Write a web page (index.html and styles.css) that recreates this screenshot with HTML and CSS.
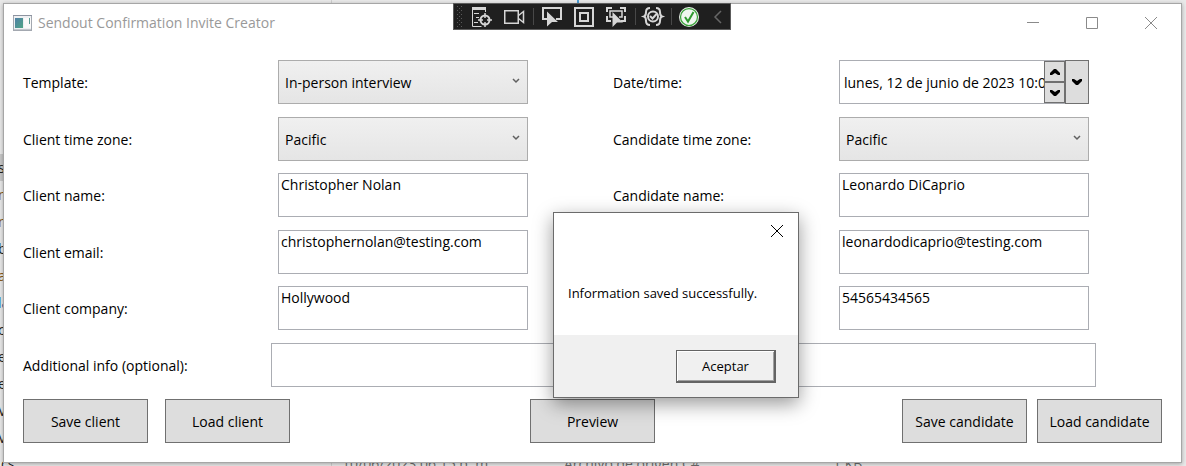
FILE: index.html
```html
<!DOCTYPE html>
<html lang="en">
<head>
<meta charset="utf-8">
<title>Sendout Confirmation Invite Creator</title>
<link rel="stylesheet" href="styles.css">
</head>
<body>
<div class="backdrop" aria-hidden="true">
  <div class="tree">
    <span class="tree-item tree-item-active">s</span>
    <span class="tree-item tree-brown">n</span>
    <span class="tree-item tree-brown">n</span>
    <span class="tree-item">b</span>
    <span class="tree-item tree-brown">a</span>
    <span class="tree-item tree-blue">la</span>
    <span class="tree-item">c</span>
    <span class="tree-item">e</span>
    <span class="tree-item">e</span>
    <span class="tree-item">Vi</span>
    <span class="tree-item">Vi</span>
  </div>
  <div class="file-row">
    <span class="file-name">cs</span>
    <span>10/06/2023 06:15 p. m.</span>
    <span>Archivo de origen C#</span>
    <span>1 KB</span>
  </div>
</div>

<main class="window">
  <header class="titlebar">
    <svg class="app-icon" width="19" height="16" viewBox="0 0 19 16">
      <defs><linearGradient id="pane" x1="0" y1="0" x2="1" y2="1"><stop offset="0" stop-color="#4f7fa6"/><stop offset="1" stop-color="#4fa586"/></linearGradient></defs>
      <rect x=".5" y=".5" width="18" height="15" fill="#eef0f2" stroke="#a3a8b0"/>
      <path d="M0 .5h19" stroke="#8d93a0"/><path d="M1 14.5h17" stroke="#c3c7cd"/>
      <rect x="2" y="3" width="8" height="10" fill="url(#pane)"/>
      <rect x="11" y="3" width="7" height="10" fill="#fafafa"/>
      <path d="M16.500 3v6" stroke="#5c9a92"/>
    </svg>
    <h1 class="title">Sendout Confirmation Invite Creator</h1>
    <div class="caption">
      <button class="caption-button" aria-label="Minimize"><svg width="12" height="12" viewBox="0 0 12 12"><path d="M0 5.5h12"/></svg></button>
      <button class="caption-button" aria-label="Maximize"><svg width="12" height="12" viewBox="0 0 12 12"><path d="M.5 .5h11v11h-11z"/></svg></button>
      <button class="caption-button" aria-label="Close"><svg width="12" height="12" viewBox="0 0 12 12"><path d="M0 0l12 12M12 0L0 12"/></svg></button>
    </div>
  </header>

  <form class="form">
    <div class="row">
      <label for="template">Template:</label>
      <div class="select"><select id="template"><option>In-person interview</option></select><svg class="chevron" width="8" height="6" viewBox="0 0 8 6"><path d="M1 1l3 3 3-3"/></svg></div>
      <label for="date">Date/time:</label>
      <div class="datetime">
        <input id="date" class="date-input" type="text" value="lunes, 12 de junio de 2023 10:00 a. m.">
        <div class="spinner">
          <button type="button" class="spin" aria-label="Later"><svg width="10" height="6" viewBox="0 0 10 6"><path d="M4 0h2l4 4v2H8L5 4 2 6H0V4z"/></svg></button>
          <button type="button" class="spin" aria-label="Earlier"><svg width="10" height="6" viewBox="0 0 10 6"><path d="M4 6h2l4-4V0H8L5 2 2 0H0v2z"/></svg></button>
        </div>
        <button type="button" class="drop" aria-label="Open calendar"><svg width="10" height="6" viewBox="0 0 10 6"><path d="M4 6h2l4-4V0H8L5 2 2 0H0v2z"/></svg></button>
      </div>
    </div>
    <div class="row">
      <label for="client-zone">Client time zone:</label>
      <div class="select"><select id="client-zone"><option>Pacific</option></select><svg class="chevron" width="8" height="6" viewBox="0 0 8 6"><path d="M1 1l3 3 3-3"/></svg></div>
      <label for="candidate-zone">Candidate time zone:</label>
      <div class="select"><select id="candidate-zone"><option>Pacific</option></select><svg class="chevron" width="8" height="6" viewBox="0 0 8 6"><path d="M1 1l3 3 3-3"/></svg></div>
    </div>
    <div class="row">
      <label for="client-name">Client name:</label>
      <input id="client-name" class="text" type="text" value="Christopher Nolan">
      <label for="candidate-name">Candidate name:</label>
      <input id="candidate-name" class="text" type="text" value="Leonardo DiCaprio">
    </div>
    <div class="row">
      <label for="client-email">Client email:</label>
      <input id="client-email" class="text" type="text" value="christophernolan@testing.com">
      <input class="text text-candidate" type="text" aria-label="Candidate email" value="leonardodicaprio@testing.com">
    </div>
    <div class="row">
      <label for="client-company">Client company:</label>
      <input id="client-company" class="text" type="text" value="Hollywood">
      <input class="text text-candidate" type="text" aria-label="Candidate phone" value="54565434565">
    </div>
    <div class="row row-wide">
      <label for="info">Additional info (optional):</label>
      <input id="info" class="text text-wide" type="text">
    </div>
    <div class="actions">
      <div class="group group-client">
        <button type="button" class="action">Save client</button>
        <button type="button" class="action">Load client</button>
      </div>
      <button type="button" class="action">Preview</button>
      <div class="group group-candidate">
        <button type="button" class="action">Save candidate</button>
        <button type="button" class="action">Load candidate</button>
      </div>
    </div>
  </form>
</main>

<div class="debugbar" role="toolbar" aria-label="Debug tools">
  <svg class="debug-icons" width="276" height="25" viewBox="0 0 276 25" fill="none" stroke="#d6d6d6">
    <g stroke="#5a5a5a" stroke-dasharray="1 3"><path d="M3.500 2v22M7.500 2v22"/><path d="M5.500 4v20"/></g>
    <path d="M18.500 3v19.500h9"/><path d="M18 4.500h14" stroke-width="3"/><path d="M31.500 5v3"/>
    <path d="M20 9.500h5M22 13.500h3M20 18.500h4"/>
    <circle cx="31" cy="16" r="4.500" stroke-width="2"/><path d="M31 9v5M31 18v5M24 16h5M33 16h5" stroke-width="1.500"/>
    <path d="M50.750 6.750h13.500v12.500h-13.500zM64.500 11.500l5-4v11l-5-4" stroke-width="1.500"/>
    <path d="M79.500 4v17M181.500 4v17M217.500 4v17" stroke="#484848"/>
    <path d="M93 15H89V4h18v11h-5" stroke-width="2"/><path d="M93 7.500v15l5-4.500h6z" fill="#d6d6d6" stroke="none"/>
    <path d="M121 4h18v18h-18z" stroke-width="2"/><path d="M126 9h8v8h-8z" stroke-width="2"/>
    <path d="M153 8V4h5M166 4h5v4M153 12v5h4M171 12v5h-4" stroke-width="2"/><path d="M159 13h-3V7h12v6h-3" stroke-width="1.500"/><path d="M158.500 8v15l4.500-4.500h6z" fill="#d6d6d6" stroke="none"/>
    <path d="M196 4c-3 0-4 1-4 4 0 2.500-.5 4-2 4.500 1.500.5 2 2 2 4.500 0 3 1 4 4 4M202 4c3 0 4 1 4 4 0 2.500.5 4 2 4.500-1.500.5-2 2-2 4.500 0 3-1 4-4 4" stroke-width="2"/>
    <circle cx="199" cy="12.500" r="5" stroke-width="2"/><path d="M196 12l2.500 2.500 4.500-5" stroke-width="2"/>
    <circle cx="235" cy="13" r="10" fill="#f0f7f0" stroke="none"/><circle cx="235" cy="13" r="8.500" stroke="#3da33d" stroke-width="1.250"/><path d="M231 13l3 4.500 5.500-9.500" stroke="#2f9a2f" stroke-width="2"/>
    <path d="M267 7l-6 6 6 6" stroke="#666" stroke-width="1.500"/>
  </svg>
</div>

<div class="dialog" role="dialog" aria-label="Message">
  <div class="dialog-top">
    <button class="dialog-close" aria-label="Close"><svg width="12" height="12" viewBox="0 0 12 12"><path d="M0 0l12 12M12 0L0 12"/></svg></button>
  </div>
  <p class="dialog-message">Information saved successfully.</p>
  <div class="dialog-footer"><button class="accept">Aceptar</button></div>
</div>
</body>
</html>
```
FILE: styles.css
```css
* { box-sizing: border-box; }

body {
  position: relative;
  margin: 0;
  padding: 3px 4px 3px 3px;
  overflow: hidden;
  background: #e9e9e9;
  color: #000;
  font: 14px/20px "Open Sans", "Noto Sans", sans-serif;
}

button, input, select { font: inherit; color: inherit; border-radius: 0; margin: 0; }
button { display: grid; place-items: center; padding: 0; }

/* Windows behind the form */
.backdrop {
  position: absolute;
  inset: 0;
  overflow: hidden;
  background:
    linear-gradient(90deg, transparent 577px, #4a9bd4 577px, #4a9bd4 579px, transparent 579px) 0 0 / 100% 3px no-repeat,
    linear-gradient(90deg, transparent 331px, #cfcfcf 331px, #cfcfcf 332px, transparent 332px) no-repeat;
}
.tree { width: 4px; padding-top: 154px; overflow: hidden; }
.tree-item { display: block; height: 27px; line-height: 27px; text-indent: -2px; color: #222; white-space: nowrap; }
.tree-item-active { background: #c8c8c8; }
.tree-brown { color: #8a5a14; }
.tree-blue { color: #1c63a8; }
.file-row {
  position: absolute;
  top: 454px;
  left: 1px;
  display: grid;
  grid-template-columns: 341px 222px 269px 100px;
  color: #6d6d6d;
  white-space: nowrap;
}
.file-name { color: #222; }

/* Main window */
.window {
  position: relative;
  background: #fff;
  border: 1px solid #a6a6a6;
  box-shadow: 0 1px 4px rgba(0, 0, 0, .3);
}
.titlebar { display: flex; align-items: center; height: 37px; padding: 0 18px 0 9px; }
.title { flex: 1; margin: 0 0 0 6px; font-size: 14px; font-weight: 400; color: #999; }
.caption { display: flex; gap: 35px; }
.caption-button { width: 24px; height: 24px; border: 0; background: none; }
.caption svg, .dialog-close svg { fill: none; stroke: #8a8a8a; }

.form {
  display: grid;
  align-content: space-between;
  min-height: 383px;
  margin: 19px 19px 19px;
}
.row { display: grid; grid-template-columns: 255fr 335fr 226fr 323fr; align-items: center; }
.row-wide { grid-template-columns: 248fr 825fr 66fr; }
.row label { padding-top: 2px; }

.text, .select, .datetime { width: 250px; height: 44px; }
.text { padding: 0 2px 21px; border: 1px solid #abadb3; background: #fff; }
.text-wide { width: 100%; }
.text-candidate { grid-column: 4; }

.select { position: relative; }
.select select {
  appearance: none;
  width: 100%;
  height: 100%;
  padding: 2px 24px 0 6px;
  border: 1px solid #acacac;
  background: linear-gradient(#f0f0f0, #e5e5e5);
}
.chevron { position: absolute; top: 18px; right: 8px; fill: none; stroke: #606060; stroke-width: 1.5; pointer-events: none; }

.datetime { display: flex; border: 1px solid #abadb3; }
.date-input { flex: 1; min-width: 0; padding: 2px 0 0 4px; border: 0; background: none; }
.spinner { display: grid; grid-template-rows: 1fr 1fr; width: 21px; }
.spin { border: 1px solid #707070; background: #ddd; }
.drop { width: 24px; margin: -1px -1px -1px 0; border: 1px solid #707070; background: #ddd; }

.actions { display: grid; grid-template-columns: 1fr 125px 1fr; }
.group { display: flex; }
.group-client { gap: 17px; }
.group-candidate { gap: 10px; justify-content: flex-end; }
.action { width: 125px; height: 44px; padding-top: 2px; border: 1px solid #707070; background: #ddd; }

/* Floating debugger toolbar */
.debugbar {
  position: absolute;
  top: 3px;
  left: 453px;
  border: 1px solid #5c5c5c;
  background: #1f1f1f;
}
.debug-icons { display: block; }

/* Message box */
.dialog {
  position: absolute;
  top: 212px;
  left: 553px;
  width: 246px;
  border: 1px solid #6b6b6b;
  background: #fff;
  box-shadow: 0 6px 18px rgba(0, 0, 0, .4);
  font-size: 13px;
}
.dialog-top { display: flex; justify-content: flex-end; padding: 6px 9px; }
.dialog-close { width: 24px; height: 24px; border: 0; background: none; }
.dialog .dialog-close svg { stroke: #000; }
.dialog-message { margin: 34px 14px 32px; }
.dialog-footer { display: flex; justify-content: flex-end; padding: 15px 22px 14px; background: #f0f0f0; }
.accept {
  width: 100px;
  height: 33px;
  border: 1px solid #646464;
  border-right-width: 2px;
  border-bottom-width: 2px;
  background: #f0f0f0;
  box-shadow: inset 1px 1px #fff, inset -1px -1px #a0a0a0;
}
```
